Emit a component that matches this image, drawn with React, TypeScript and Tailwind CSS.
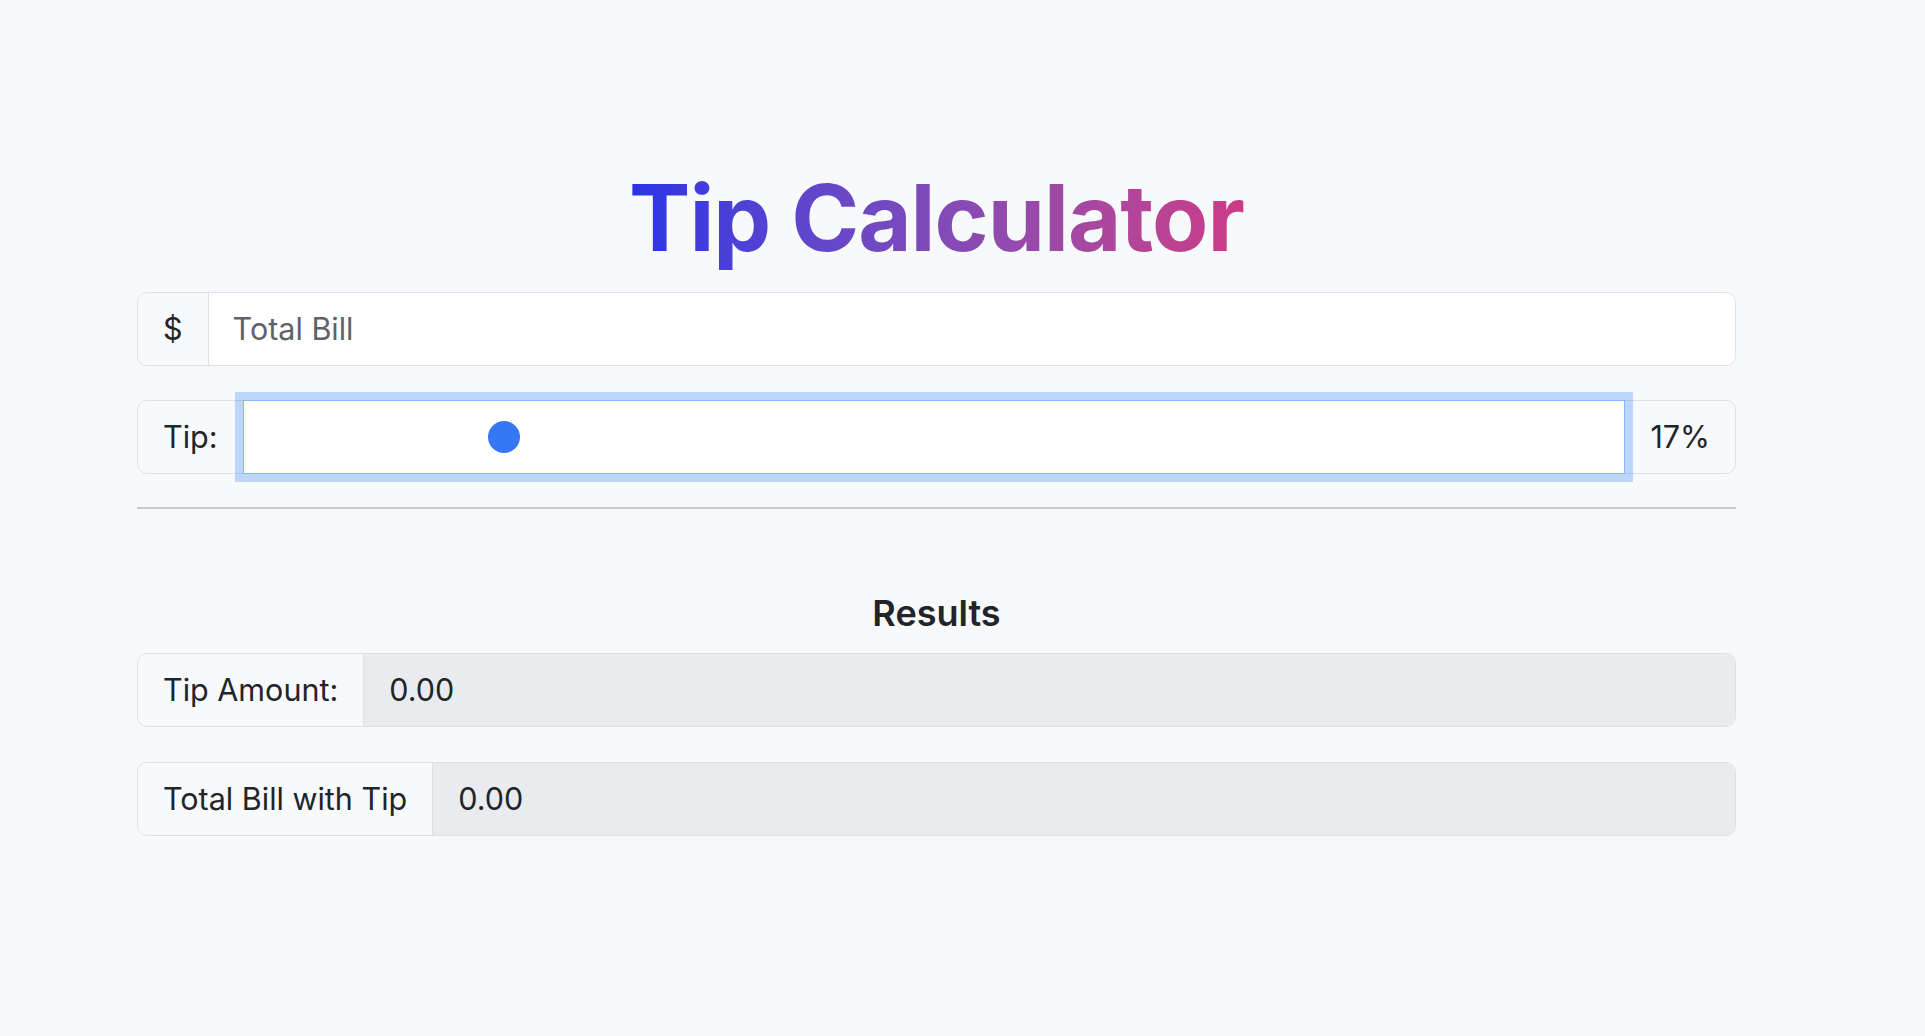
import { useState } from 'react';

const font = { fontFamily: 'Inter, "Noto Sans", sans-serif' };

function ResultRow({ label, value }: { label: string; value: string }) {
  return (
    <div className="flex h-[74px] rounded-[10px] border border-[#dee2e6] overflow-hidden">
      <div className="flex items-center px-[25px] bg-[#f8f9fa] border-r border-[#dee2e6] text-[30.5px] text-[#212529]">
        {label}
      </div>
      <div className="flex flex-1 items-center px-[25px] bg-[#e9ebee] text-[30.5px] text-[#212529]">
        {value}
      </div>
    </div>
  );
}

export default function App() {
  const [bill, setBill] = useState('');
  const [tip] = useState(17);

  const amount = parseFloat(bill) || 0;
  const tipAmount = (amount * tip) / 100;
  const total = amount + tipAmount;

  return (
    <div className="min-h-screen bg-[#f8f9fa] pt-[172px]" style={font}>
      <div className="ml-[137px] w-[1599px] flex flex-col">
        <h1 className="text-center text-[92px] leading-none font-bold tracking-[-1px]">
          <span className="bg-gradient-to-r from-[#2a32e6] to-[#cd3a86] bg-clip-text text-transparent">
            Tip Calculator
          </span>
        </h1>

        {/* Bill input */}
        <div className="mt-[28px] flex h-[74px] rounded-[10px] border border-[#dee2e6] overflow-hidden">
          <div className="flex items-center px-[25px] bg-[#f8f9fa] border-r border-[#dee2e6] text-[30.5px] text-[#212529]">
            $
          </div>
          <input
            value={bill}
            onChange={e => setBill(e.target.value)}
            placeholder="Total Bill"
            className="flex-1 bg-white px-[24px] text-[30.5px] text-[#212529] placeholder:text-[#5f6367] outline-none"
          />
        </div>

        {/* Tip slider */}
        <div className="mt-[34px] flex h-[74px] rounded-[10px] border border-[#dee2e6]">
          <div className="flex items-center px-[25px] bg-[#f8f9fa] rounded-l-[10px] text-[30.5px] text-[#212529]">
            Tip:
          </div>
          <div className="relative z-10 flex-1 -my-px bg-white border border-[#86b7fe] shadow-[0_0_0_8px_rgba(13,110,253,0.25)]">
            <div
              className="absolute top-1/2 -translate-y-1/2 w-[32px] h-[32px] rounded-full bg-[#3478f6]"
              style={{ left: `calc(${tip}% + 10px)` }}
            />
          </div>
          <div className="flex items-center px-[25px] bg-[#f8f9fa] rounded-r-[10px] text-[30.5px] text-[#212529]">
            {tip}%
          </div>
        </div>

        <div className="mt-[33px] h-[2px] bg-[#c8c9cb]" />

        <h3 className="mt-[86px] text-center text-[36px] leading-none font-semibold text-[#212529]">
          Results
        </h3>

        <div className="mt-[22px] flex flex-col gap-[35px]">
          <ResultRow label="Tip Amount:" value={tipAmount.toFixed(2)} />
          <ResultRow label="Total Bill with Tip" value={total.toFixed(2)} />
        </div>
      </div>
    </div>
  );
}
